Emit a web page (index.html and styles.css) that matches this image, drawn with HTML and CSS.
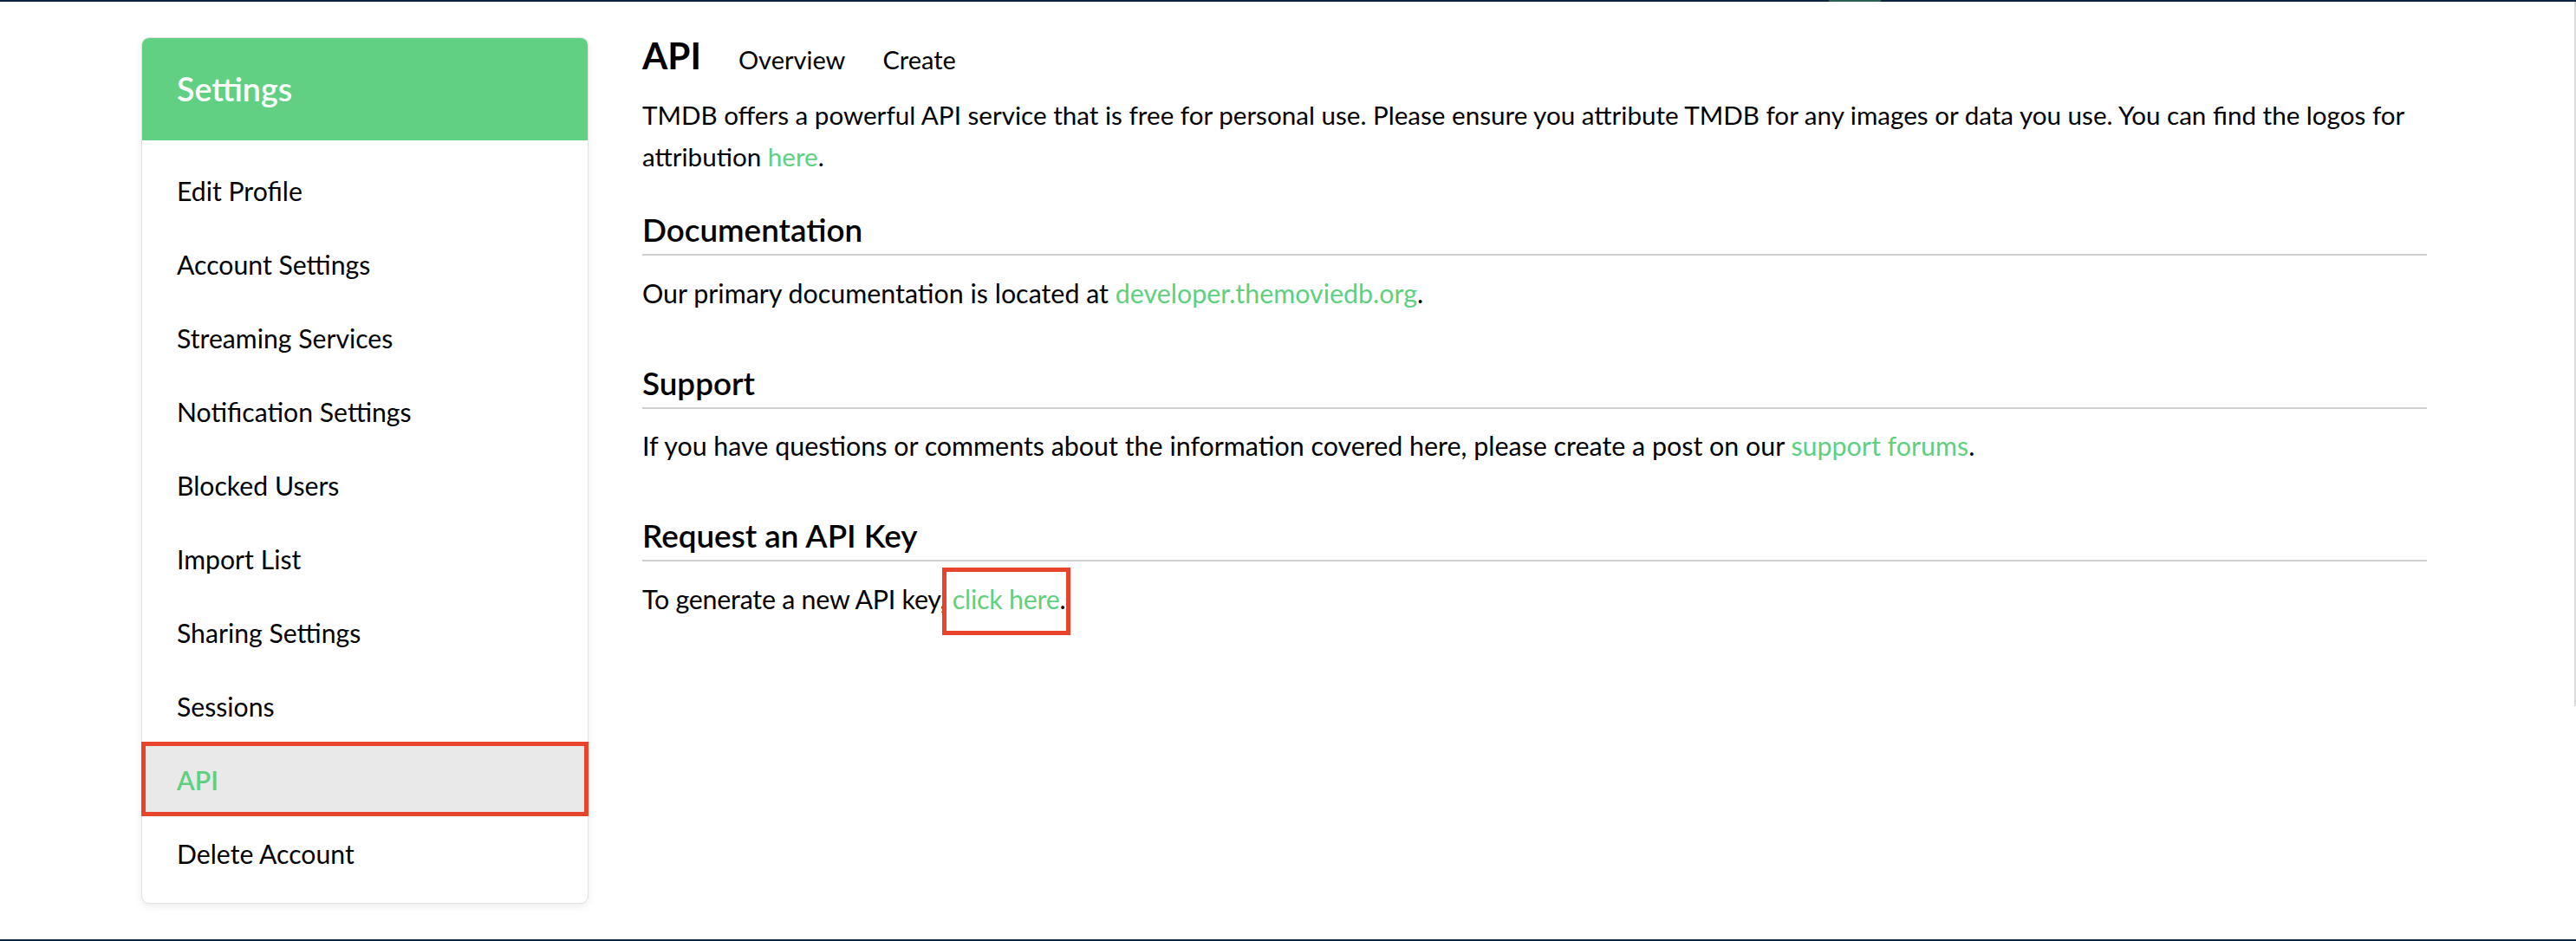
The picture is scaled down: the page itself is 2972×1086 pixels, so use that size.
FILE: index.html
```html
<!DOCTYPE html>
<html lang="en">
<head>
<meta charset="utf-8">
<title>API Settings</title>
<link rel="stylesheet" href="styles.css">
</head>
<body>
<div class="page">
  <div class="topbar"><span class="topbar-mark"></span></div>
  <main class="main">
    <aside class="card">
      <div class="card-header">Settings</div>
      <ul class="menu">
        <li class="menu-item">Edit Profile</li>
        <li class="menu-item">Account Settings</li>
        <li class="menu-item">Streaming Services</li>
        <li class="menu-item">Notification Settings</li>
        <li class="menu-item">Blocked Users</li>
        <li class="menu-item">Import List</li>
        <li class="menu-item">Sharing Settings</li>
        <li class="menu-item">Sessions</li>
        <li class="menu-item active">API</li>
        <li class="menu-item">Delete Account</li>
      </ul>
    </aside>
    <section class="content">
      <div class="title-row">
        <h2 class="title">API</h2>
        <a class="subnav">Overview</a>
        <a class="subnav">Create</a>
      </div>
      <p class="intro">TMDB offers a powerful API service that is free for personal use. Please ensure you attribute TMDB for any images or data you use. You can find the logos for attribution <a class="link">here</a>.</p>
      <div class="section">
        <h3 class="section-title">Documentation</h3>
        <p class="text">Our primary documentation is located at <a class="link">developer.themoviedb.org</a>.</p>
      </div>
      <div class="section">
        <h3 class="section-title">Support</h3>
        <p class="text">If you have questions or comments about the information covered here, please create a post on our <a class="link">support forums</a>.</p>
      </div>
      <div class="section">
        <h3 class="section-title">Request an API Key</h3>
        <p class="text text-tight">To generate a new API key, <a class="link marked">click here</a>.</p>
      </div>
    </section>
  </main>
  <div class="footbar"></div>
  <div class="scroll-thumb"></div>
</div>
</body>
</html>
```
FILE: styles.css
```css
* { box-sizing: border-box; }
html, body { margin: 0; padding: 0; }
body {
  font-family: "Lato", "Open Sans", sans-serif;
  color: #000;
  background: #fff;
  font-size: 29.6px;
  line-height: 48px;
}
.page {
  position: relative;
  height: 1086px;
  display: flex;
  flex-direction: column;
  overflow: hidden;
}
.topbar {
  height: 2px;
  background: #0d253f;
  display: flex;
}
.topbar-mark {
  margin-left: 2110px;
  width: 60px;
  height: 2px;
  background: #2e6156;
}
.footbar {
  height: 2px;
  background: #0d253f;
}
.scroll-thumb {
  position: absolute;
  right: 0;
  top: 2px;
  width: 2px;
  height: 813px;
  background: #d9d9d9;
}
.main {
  flex: 1;
  display: flex;
  align-items: flex-start;
  padding: 38px 172px 0 163px;
  gap: 62px;
}
.card {
  flex: 0 0 516px;
  margin-top: 3px;
  border: 1px solid #e2e2e2;
  border-radius: 9px;
  box-shadow: 0 3px 10px rgba(0, 0, 0, 0.08);
  background: #fff;
}
.card-header {
  height: 118px;
  display: flex;
  align-items: center;
  padding: 0 40px;
  background: #61d082;
  color: #fff;
  font-size: 37.6px;
  font-weight: 600;
  border-radius: 8px 8px 0 0;
  line-height: 1.2;
}
.menu {
  list-style: none;
  margin: 0;
  padding: 15px 0;
}
.menu-item {
  height: 85px;
  display: flex;
  align-items: center;
  padding: 0 40px;
  font-size: 30.2px;
  line-height: 48px;
}
.menu-item.active {
  position: relative;
  background: #e9e9e9;
  color: #5fcf80;
  font-weight: 600;
}
.menu-item.active::after {
  content: "";
  position: absolute;
  left: -1px;
  right: -1px;
  top: -1px;
  bottom: 0;
  border: 5px solid #e8432b;
}
.content {
  flex: 1;
  min-width: 0;
}
.title-row {
  display: flex;
  align-items: baseline;
  gap: 43px;
}
.title {
  margin: 0;
  font-size: 42.2px;
  font-weight: 700;
  line-height: 1.15;
}
.subnav {
  font-size: 29px;
  color: #000;
}
.intro {
  margin: 16px 0 38px;
}
.section {
  margin-bottom: 58px;
}
.section-title {
  margin: 0 0 18.5px;
  font-size: 36.8px;
  font-weight: 600;
  line-height: 1.2;
  padding-bottom: 6px;
  border-bottom: 2px solid #cfcfcf;
}
.text {
  margin: 0;
  font-size: 30.4px;
}
.text-tight {
  letter-spacing: -0.25px;
}
.link {
  color: #5fcf80;
  text-decoration: none;
}
.marked {
  position: relative;
}
.marked::after {
  content: "";
  position: absolute;
  left: -12px;
  right: -13px;
  top: -18px;
  bottom: -24px;
  border: 5px solid #e8432b;
}
```
